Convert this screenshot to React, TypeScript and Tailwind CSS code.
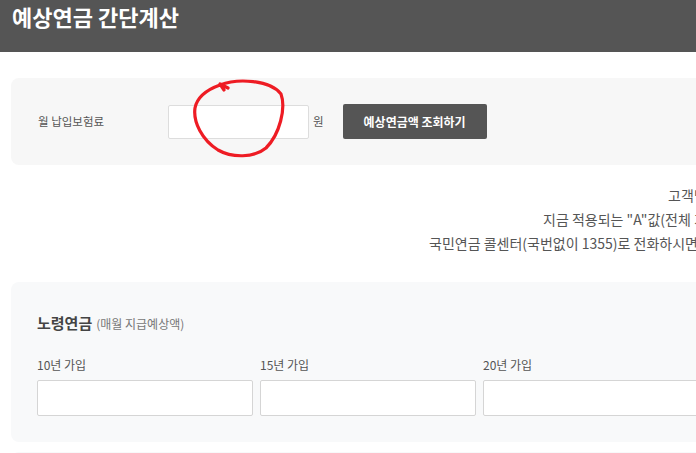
const font = "font-['Noto_Sans_CJK_KR','Noto_Sans',sans-serif]";

const periods = ["10년 가입", "15년 가입", "20년 가입", "25년 가입"];

export default function App() {
  return (
    <div className={`w-[696px] h-[453px] overflow-hidden bg-white ${font}`}>
      <div className="w-[1100px]">
        {/* Header */}
        <div className="h-[52px] bg-[#555555] pl-[12px]">
          <h1 className="text-[22px] font-bold leading-[32px] text-white">예상연금 간단계산</h1>
        </div>

        {/* Input panel */}
        <div className="mx-[11px] mt-[26px] flex h-[87px] items-center rounded-lg bg-[#f7f7f7] pl-[27px]">
          <span className="w-[130px] text-[11.5px] text-[#555]">월 납입보험료</span>
          <div className="relative">
            <input className="h-[34px] w-[141px] rounded-[2px] border border-[#dddddd] bg-white outline-none" />
            <svg
              className="pointer-events-none absolute left-[22px] top-[-27px]"
              width="100"
              height="84"
              viewBox="0 0 100 84"
              fill="none"
            >
              <path
                d="M38 10 L30 6 L34 12 M30 7 C48 0 80 2 91 16 C96 30 90 56 76 70 C64 80 42 80 28 72 C12 62 3 44 5 30 C7 20 16 12 30 7"
                stroke="#ee1c24"
                strokeWidth="3.2"
                strokeLinecap="round"
                strokeLinejoin="round"
              />
            </svg>
          </div>
          <span className="ml-[4px] text-[11.5px] text-[#555]">원</span>
          <button className="ml-[19px] h-[35px] w-[144px] rounded-[2px] bg-[#555555] text-[12px] font-bold text-white">
            예상연금액 조회하기
          </button>
        </div>

        {/* Notice */}
        <div className="mt-[18px] whitespace-nowrap text-[14px] leading-[24px] text-[#555]">
          <p className="pl-[668px]">고객님의 예상연금액은 참고용으로 제공되는 금액입니다.</p>
          <p className="pl-[543px]">지금 적용되는 "A"값(전체 가입자 평균소득월액)을 기준으로 산정하였습니다.</p>
          <p className="pl-[429px]">국민연금 콜센터(국번없이 1355)로 전화하시면 정확한 연금액을 안내받으실 수 있습니다.</p>
        </div>

        {/* Old-age pension */}
        <div className="mx-[11px] mt-[27px] rounded-lg bg-[#f8f9fa] px-[26px] pb-[26px] pt-[31px]">
          <div className="flex items-baseline leading-[20px]">
            <span className="text-[15px] font-bold text-[#444]">노령연금</span>
            <span className="ml-[4px] text-[12px] text-[#777]">(매월 지급예상액)</span>
          </div>
          <div className="mt-[23px] flex gap-[7px]">
            {periods.map((p) => (
              <div key={p} className="w-[216px]">
                <div className="mb-[7px] text-[12px] leading-[16px] text-[#555]">{p}</div>
                <input className="h-[36px] w-full rounded-[2px] border border-[#d5d5d5] bg-white outline-none" />
              </div>
            ))}
          </div>
        </div>

        <div className="mx-[11px] mt-[10px] h-[100px] rounded-lg bg-[#f8f9fa]" />
      </div>
    </div>
  );
}
